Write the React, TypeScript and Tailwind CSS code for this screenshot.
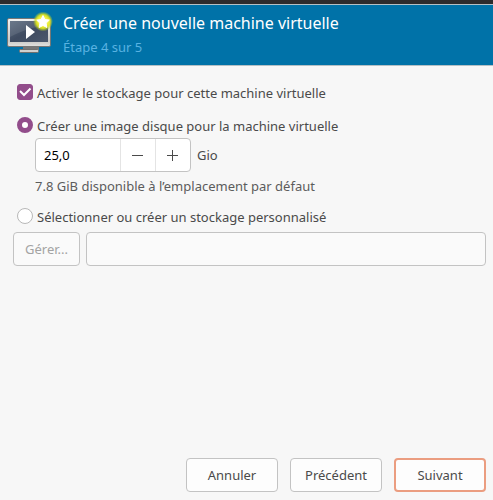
import { useState } from "react";
import { clsx } from "clsx";

function WizardIcon() {
  return (
    <svg width="48" height="48" viewBox="0 0 48 48" aria-hidden="true">
      <defs>
        <linearGradient id="frame" x1="0" y1="0" x2="0" y2="1">
          <stop offset="0" stopColor="#f4f4f3" />
          <stop offset="0.8" stopColor="#c9c9c6" />
          <stop offset="1" stopColor="#e2e2e0" />
        </linearGradient>
        <linearGradient id="screen" x1="0" y1="0" x2="1" y2="1">
          <stop offset="0" stopColor="#5b6a7e" />
          <stop offset="0.5" stopColor="#3f4b60" />
          <stop offset="1" stopColor="#4b586d" />
        </linearGradient>
        <radialGradient id="glow">
          <stop offset="0" stopColor="#ffffa0" />
          <stop offset="0.5" stopColor="#f0f040" />
          <stop offset="0.7" stopColor="#dfe61c" stopOpacity="0.9" />
          <stop offset="0.85" stopColor="#c0d428" stopOpacity="0.5" />
          <stop offset="1" stopColor="#a0c830" stopOpacity="0" />
        </radialGradient>
      </defs>
      <path d="M18 35h16v4H18z" fill="#777" />
      <rect x="14.5" y="38.5" width="19" height="3" rx="1" fill="#d0d0ce" stroke="#70706e" />
      <rect x="2.5" y="7.5" width="43" height="28" rx="1.5" fill="url(#frame)" stroke="#777775" />
      <rect x="5" y="10" width="38" height="21" fill="url(#screen)" />
      <path d="M5 10h38v5C28 15 17 20 5 26z" fill="#fff" opacity="0.1" />
      <path d="M21 14v14l9-7z" fill="#fff" />
      <circle cx="38" cy="10.500" r="10" fill="url(#glow)" />
      <path
        d="M38 4.500l1.900 4 4.400.6-3.200 3 .8 4.400-3.900-2.100-3.900 2.100.8-4.400-3.200-3 4.400-.6z"
        fill="#fff"
        stroke="#fff"
        strokeLinejoin="round"
      />
    </svg>
  );
}

function Radio({
  label,
  checked,
  onChange,
}: {
  label: string;
  checked: boolean;
  onChange: () => void;
}) {
  return (
    <label className="flex items-center gap-1 self-start">
      <input
        type="radio"
        name="storage"
        checked={checked}
        onChange={onChange}
        className="h-4 w-4 appearance-none rounded-full border border-[#b8b8b8] bg-white checked:border-[5px] checked:border-[#924d8b]"
      />
      <span className="pt-0.5">{label}</span>
    </label>
  );
}

function FooterButton({
  label,
  primary,
}: {
  label: string;
  primary?: boolean;
}) {
  return (
    <button
      type="button"
      className={clsx(
        "h-[34px] w-[92px] rounded bg-[#fdfdfd]",
        primary ? "border-2 border-[#eb9d80]" : "border border-[#c3c3c3]"
      )}
    >
      {label}
    </button>
  );
}

export default function App() {
  const [enabled, setEnabled] = useState(true);
  const [mode, setMode] = useState<"image" | "custom">("image");
  const [size, setSize] = useState(25);
  const custom = enabled && mode === "custom";

  return (
    <div className="flex min-h-screen flex-col bg-[#f7f7f7] font-['Noto_Sans',sans-serif] text-[13px] leading-5 text-[#4a4a4a]">
      {/* Edge of the window title bar */}
      <div className="h-1 bg-[#2d2b2d]" />

      <header className="flex h-[62px] items-center gap-2.5 border-y border-[#b5c0c5] bg-[#0072a8] pl-[5px]">
        <WizardIcon />
        <div className="flex flex-col">
          <h1 className="text-base leading-6 text-white">
            Créer une nouvelle machine virtuelle
          </h1>
          <p className="leading-6 text-[#59b2e2]">Étape 4 sur 5</p>
        </div>
      </header>

      <main className="flex flex-1 flex-col pt-[15px] pr-[7px] pl-[13px]">
        <div className="flex flex-col pl-1">
          <label className="mb-[11px] flex items-center gap-1 self-start">
            <span className="grid h-4 w-4">
              <input
                type="checkbox"
                checked={enabled}
                onChange={(e) => setEnabled(e.target.checked)}
                className="peer col-start-1 row-start-1 h-4 w-4 appearance-none rounded-[3px] border border-[#b8b8b8] bg-white checked:border-[#924d8b] checked:bg-[#924d8b]"
              />
              <svg
                className="pointer-events-none col-start-1 row-start-1 hidden peer-checked:block"
                width="16"
                height="16"
                viewBox="0 0 16 16"
                fill="none"
                stroke="#fff"
                strokeWidth="2"
              >
                <path d="M3 7l4 4 6.500-6.500" />
              </svg>
            </span>
            <span className="pt-0.5">
              Activer le stockage pour cette machine virtuelle
            </span>
          </label>

          <Radio
            label="Créer une image disque pour la machine virtuelle"
            checked={mode === "image"}
            onChange={() => setMode("image")}
          />

          <div className="mt-0.5 ml-[18px] flex items-center gap-1.5">
            <div className="flex h-[34px] w-[156px] overflow-hidden rounded border border-[#c3c3c3] bg-white">
              <input
                id="disk-size"
                type="text"
                inputMode="decimal"
                readOnly
                value={size.toFixed(1).replace(".", ",")}
                className="min-w-0 flex-1 pl-2 text-black outline-none"
              />
              <button
                type="button"
                aria-label="Diminuer"
                onClick={() => setSize(Math.max(0, size - 1))}
                className="grid w-[35px] place-items-center border-l border-[#e4e4e4]"
              >
                <svg width="12" height="12" viewBox="0 0 12 12" stroke="#4a4a4a">
                  <path d="M0 6.500h11" />
                </svg>
              </button>
              <button
                type="button"
                aria-label="Augmenter"
                onClick={() => setSize(size + 1)}
                className="grid w-[35px] place-items-center border-l border-[#e4e4e4]"
              >
                <svg width="12" height="12" viewBox="0 0 12 12" stroke="#4a4a4a">
                  <path d="M0 6.500h11M5.500 1v11" />
                </svg>
              </button>
            </div>
            <label htmlFor="disk-size">Gio</label>
          </div>

          <p className="mt-1 mb-[9px] ml-[18px] text-[#5c5c5c]">
            7.8 GiB disponible à l’emplacement par défaut
          </p>

          <Radio
            label="Sélectionner ou créer un stockage personnalisé"
            checked={mode === "custom"}
            onChange={() => setMode("custom")}
          />
        </div>

        <div className="mt-[5px] flex gap-1.5">
          <button
            type="button"
            disabled={!custom}
            className="h-[34px] w-[67px] rounded border border-[#c3c3c3] bg-[#fafafa] disabled:text-[#a3a3a3]"
          >
            Gérer...
          </button>
          <input
            type="text"
            aria-label="Chemin du stockage"
            disabled={!custom}
            className="h-[34px] min-w-0 flex-1 rounded border border-[#c3c3c3] bg-[#fafafa] px-2"
          />
        </div>
      </main>

      <footer className="flex justify-end gap-3 pr-[7px] pb-2">
        <FooterButton label="Annuler" />
        <FooterButton label="Précédent" />
        <FooterButton label="Suivant" primary />
      </footer>
    </div>
  );
}
